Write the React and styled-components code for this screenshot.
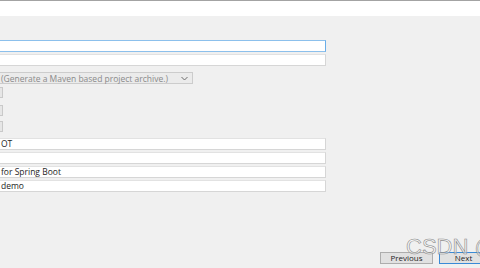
import React from "react";
import styled, { createGlobalStyle } from "styled-components";

const Global = createGlobalStyle`
  html, body { margin: 0; padding: 0; background: #f0f0f0; overflow: hidden; }
  body { font-family: "Open Sans", "Noto Sans", sans-serif; }
`;

const Page = styled.div`
  position: relative;
  height: 268px;
  display: flex;
  flex-direction: column;
  border-top: 1px solid #a3a3a3;
  box-sizing: border-box;
`;

const Banner = styled.div`
  height: 15px;
  background: #ffffff;
`;

const Form = styled.div`
  display: flex;
  flex-direction: column;
  padding-top: 24px;
`;

const Field = styled.div`
  box-sizing: border-box;
  width: ${p => p.w || 326}px;
  height: 12px;
  margin-bottom: ${p => p.gap ?? 2}px;
  background: #ffffff;
  border: 1px solid ${p => (p.focused ? "#8cc0ec" : "#e2e2e2")};
  border-right-color: ${p => (p.focused ? "#6aaee8" : "#d6d6d6")};
  border-bottom-color: ${p => (p.focused ? "#8cc0ec" : "#d6d6d6")};
  border-left: none;
  font-size: 8.5px;
  line-height: 10px;
  color: #1e1e1e;
  padding-left: 1px;
  white-space: nowrap;
  overflow: hidden;
`;

const Select = styled.div`
  box-sizing: border-box;
  width: 193px;
  height: 12px;
  margin-bottom: 2px;
  background: #ebebeb;
  border: 1px solid #cccccc;
  border-left: none;
  display: flex;
  align-items: center;
  justify-content: space-between;
  padding: 0 4px 0 1px;
  font-size: 8.5px;
  color: #8a8a8a;
  white-space: nowrap;
`;

const Stub = styled.div`
  box-sizing: border-box;
  width: 3px;
  height: 11px;
  margin-top: ${p => p.top}px;
  background: #e6e6e6;
  border: 1px solid #c9c9c9;
  border-left: none;
`;

const Gap = styled.div`
  height: ${p => p.h}px;
`;

const Footer = styled.div`
  margin-top: auto;
  display: flex;
  justify-content: flex-end;
  gap: 6px;
  padding-bottom: 4px;
  margin-right: -8px;
`;

const Button = styled.div`
  box-sizing: border-box;
  width: ${p => p.w}px;
  height: 12px;
  background: #e1e1e1;
  border: 1px solid ${p => (p.primary ? "#3a8ad6" : "#adadad")};
  font-size: 8px;
  line-height: 10px;
  text-align: center;
  color: #1e1e1e;
`;

const Watermark = styled.div`
  position: absolute;
  left: 406px;
  top: 233px;
  font-family: "Liberation Sans", Arial, sans-serif;
  font-size: 22px;
  color: rgba(255, 255, 255, 0.5);
  -webkit-text-stroke: 0.6px #8a8a8a;
  white-space: nowrap;
  pointer-events: none;
`;

export default function App() {
  return (
    <Page>
      <Global />
      <Banner />
      <Form>
        <Field focused />
        <Field gap={6} />
        <Select>
          <span>(Generate a Maven based project archive.)</span>
          <svg width="7" height="5" viewBox="0 0 7 5">
            <path d="M0.5 1 L3.5 4 L6.5 1" fill="none" stroke="#6d6d6d" strokeWidth="1" />
          </svg>
        </Select>
        <Stub top={1} />
        <Stub top={7} />
        <Stub top={5} />
        <Gap h={6} />
        <Field>OT</Field>
        <Field />
        <Field>for Spring Boot</Field>
        <Field>demo</Field>
      </Form>
      <Footer>
        <Button w={53}>Previous</Button>
        <Button w={49} primary>Next</Button>
      </Footer>
      <Watermark>CSDN @</Watermark>
    </Page>
  );
}
